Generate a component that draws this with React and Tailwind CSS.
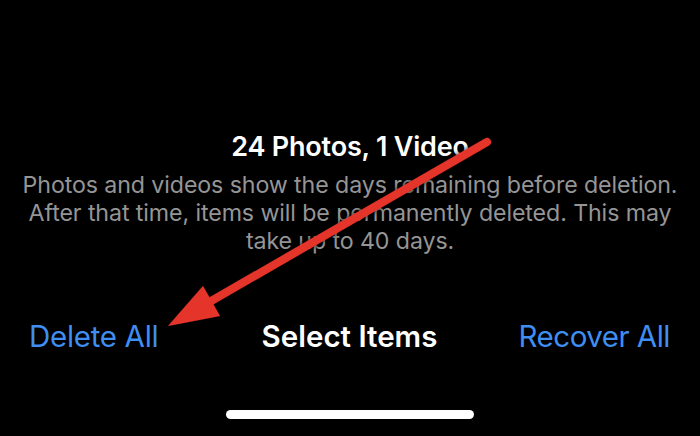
export default function App() {
  const font = { fontFamily: 'Inter, "Noto Sans", sans-serif' };
  return (
    <div className="relative w-[700px] h-[436px] bg-black overflow-hidden" style={font}>
      <div className="flex flex-col items-center h-full pt-[131px]">
        <div className="text-[27px] leading-[32px] font-semibold text-white tracking-[-0.2px]">24 Photos, 1 Video</div>
        <div className="mt-[8px] text-[23.2px] leading-[28px] text-[#959595] text-center w-[700px] tracking-[-0.1px] whitespace-nowrap">
          Photos and videos show the days remaining before deletion.
          <br />
          After that time, items will be permanently deleted. This may
          <br />
          take up to 40 days.
        </div>
        <div className="mt-auto w-full grid grid-cols-[1fr_auto_1fr] items-center pl-[29px] pr-[30px] text-[29.5px] leading-[34px] tracking-[-0.3px]">
          <span className="justify-self-start text-[#3f8ef2]">Delete All</span>
          <span className="text-white font-semibold tracking-[0px]">Select Items</span>
          <span className="justify-self-end text-[#3f8ef2] tracking-[-0.5px]">Recover All</span>
        </div>
        <div className="mt-[57px] mb-[17px] w-[248px] h-[9px] rounded-full bg-white" />
      </div>
      <svg className="absolute inset-0 pointer-events-none" width="700" height="436" viewBox="0 0 700 436">
        <defs>
          <filter id="sh" x="-20%" y="-20%" width="140%" height="140%">
            <feDropShadow dx="0" dy="0" stdDeviation="2.5" floodColor="#000" floodOpacity="0.9" />
          </filter>
        </defs>
        <g filter="url(#sh)">
          <line x1="487" y1="142" x2="206" y2="304" stroke="#e5352b" strokeWidth="8" strokeLinecap="round" />
          <polygon points="168,326 203,286 220,316" fill="#e5352b" />
        </g>
      </svg>
    </div>
  );
}
